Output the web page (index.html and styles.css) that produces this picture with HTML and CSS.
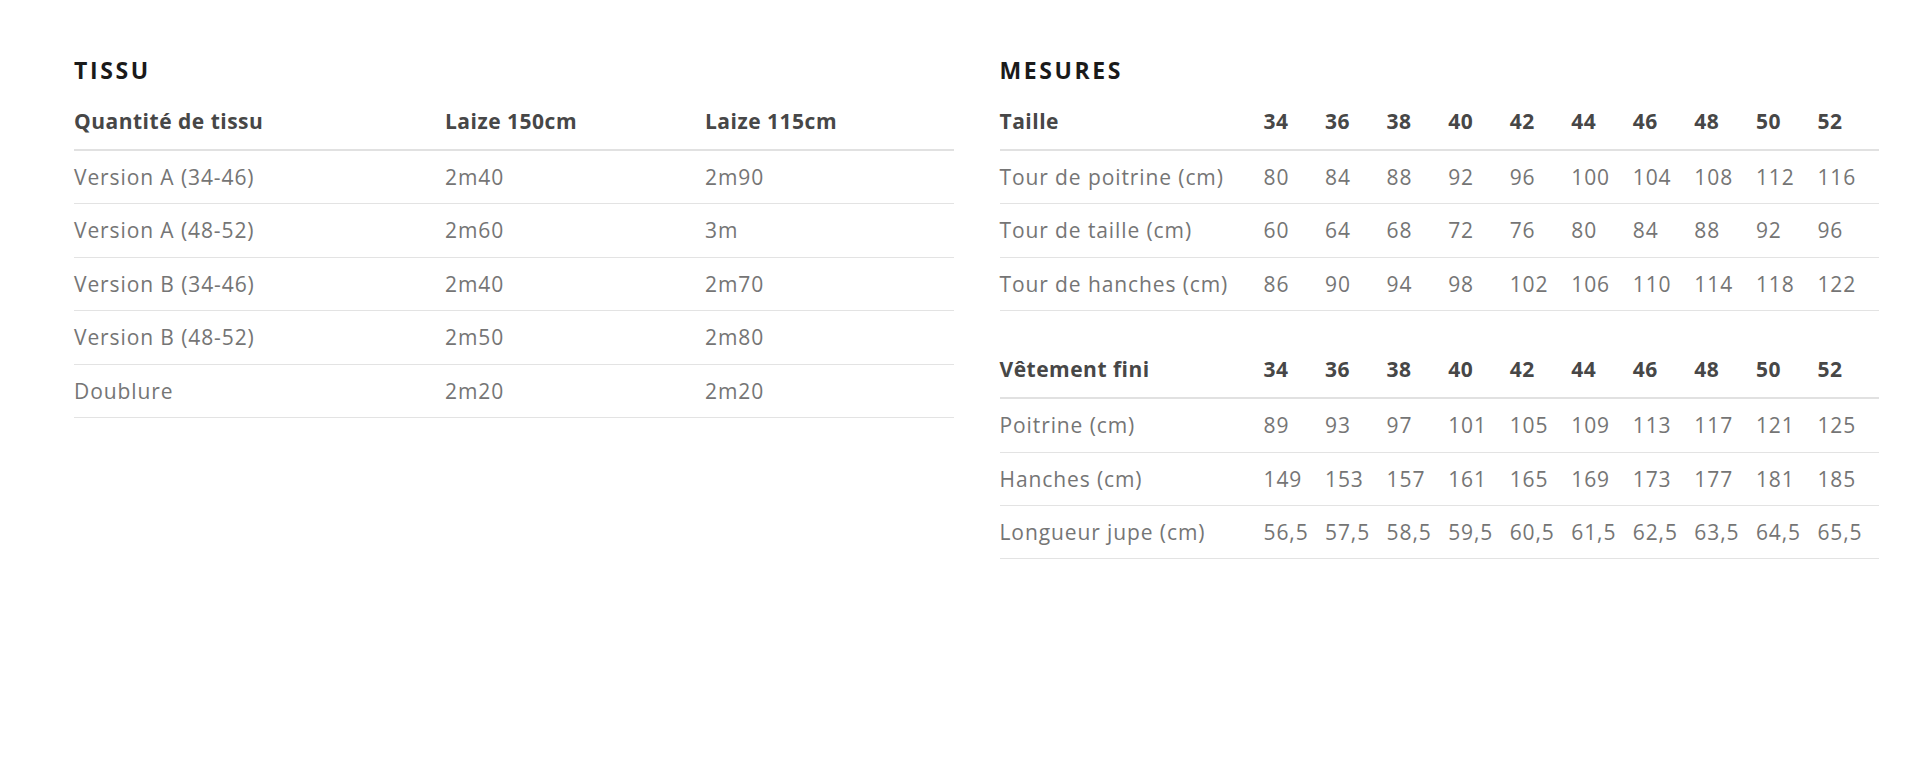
FILE: index.html
```html
<!DOCTYPE html>
<html lang="fr">
<head>
<meta charset="utf-8">
<title>Tissu et mesures</title>
<link rel="stylesheet" href="styles.css">
</head>
<body>
<main class="page">
  <section class="block">
    <h2 class="block-title">TISSU</h2>
    <table class="grid-table fabric">
      <colgroup>
        <col class="c-label"><col class="c-w150"><col class="c-w115">
      </colgroup>
      <thead>
        <tr><th>Quantité de tissu</th><th>Laize 150cm</th><th>Laize 115cm</th></tr>
      </thead>
      <tbody>
        <tr><td>Version A (34-46)</td><td>2m40</td><td>2m90</td></tr>
        <tr><td>Version A (48-52)</td><td>2m60</td><td>3m</td></tr>
        <tr><td>Version B (34-46)</td><td>2m40</td><td>2m70</td></tr>
        <tr><td>Version B (48-52)</td><td>2m50</td><td>2m80</td></tr>
        <tr><td>Doublure</td><td>2m20</td><td>2m20</td></tr>
      </tbody>
    </table>
  </section>

  <section class="block">
    <h2 class="block-title">MESURES</h2>
    <table class="grid-table sizes">
      <colgroup>
        <col class="c-name"><col span="10">
      </colgroup>
      <thead>
        <tr><th>Taille</th><th>34</th><th>36</th><th>38</th><th>40</th><th>42</th><th>44</th><th>46</th><th>48</th><th>50</th><th>52</th></tr>
      </thead>
      <tbody>
        <tr><td>Tour de poitrine (cm)</td><td>80</td><td>84</td><td>88</td><td>92</td><td>96</td><td>100</td><td>104</td><td>108</td><td>112</td><td>116</td></tr>
        <tr><td>Tour de taille (cm)</td><td>60</td><td>64</td><td>68</td><td>72</td><td>76</td><td>80</td><td>84</td><td>88</td><td>92</td><td>96</td></tr>
        <tr><td>Tour de hanches (cm)</td><td>86</td><td>90</td><td>94</td><td>98</td><td>102</td><td>106</td><td>110</td><td>114</td><td>118</td><td>122</td></tr>
      </tbody>
    </table>

    <table class="grid-table sizes finished">
      <colgroup>
        <col class="c-name"><col span="10">
      </colgroup>
      <thead>
        <tr><th>Vêtement fini</th><th>34</th><th>36</th><th>38</th><th>40</th><th>42</th><th>44</th><th>46</th><th>48</th><th>50</th><th>52</th></tr>
      </thead>
      <tbody>
        <tr><td>Poitrine (cm)</td><td>89</td><td>93</td><td>97</td><td>101</td><td>105</td><td>109</td><td>113</td><td>117</td><td>121</td><td>125</td></tr>
        <tr><td>Hanches (cm)</td><td>149</td><td>153</td><td>157</td><td>161</td><td>165</td><td>169</td><td>173</td><td>177</td><td>181</td><td>185</td></tr>
        <tr><td>Longueur jupe (cm)</td><td>56,5</td><td>57,5</td><td>58,5</td><td>59,5</td><td>60,5</td><td>61,5</td><td>62,5</td><td>63,5</td><td>64,5</td><td>65,5</td></tr>
      </tbody>
    </table>
  </section>
</main>
</body>
</html>
```

FILE: styles.css
```css
html, body {
  margin: 0;
  padding: 0;
  background: #ffffff;
}

body {
  font-family: "Open Sans", "Lato", "Liberation Sans", sans-serif;
  color: #737373;
}

.page {
  display: grid;
  grid-template-columns: 1fr 1fr;
  column-gap: 46px;
  padding: 57px 41px 0 74px;
}

.block-title {
  margin: 0 0 12px;
  font-size: 23px;
  line-height: 26px;
  font-weight: 700;
  color: #1a1a1a;
  letter-spacing: 2.6px;
}

.grid-table {
  width: 100%;
  border-collapse: collapse;
  table-layout: fixed;
  font-size: 21px;
  line-height: 24px;
}

.grid-table th,
.grid-table td {
  text-align: left;
  padding: 0;
  white-space: nowrap;
}

.grid-table th {
  font-weight: 700;
  color: #474747;
  letter-spacing: 0.5px;
  padding: 14px 0 16px;
  border-bottom: 2px solid #e1e1e1;
}

.grid-table td {
  font-weight: 400;
  color: #757575;
  letter-spacing: 0.9px;
  padding: 14px 0 14.4px;
  border-bottom: 1px solid #e3e3e3;
}

.fabric .c-label { width: 371px; }
.fabric .c-w150 { width: 260px; }

.sizes .c-name { width: 264px; }

.sizes.finished {
  margin-top: 32px;
}
```
